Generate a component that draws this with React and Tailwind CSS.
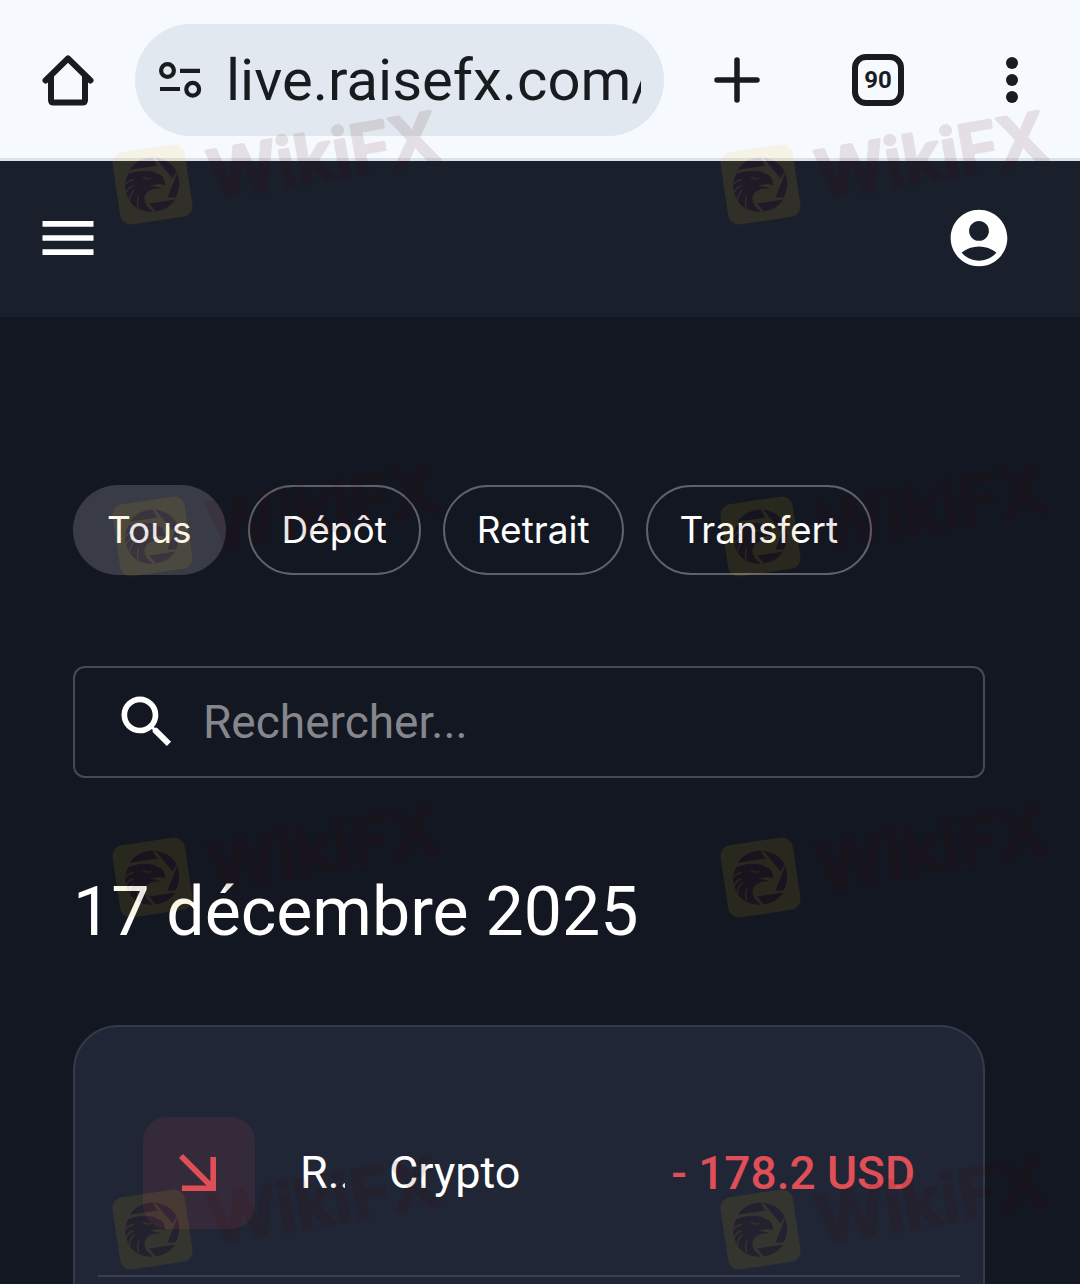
import { useState } from "react";
import { MdMenu, MdSearch } from "react-icons/md";

const FILTERS = ["Tous", "Dépôt", "Retrait", "Transfert"];

const TRANSACTIONS = [
  { id: 1, type: "R...", method: "Crypto", amount: "- 178.2 USD" },
];

// Each stamp is repeated on the left and on the right of the page
const STAMP_ROWS = ["top-[109px]", "top-[461px]", "top-[802px]", "top-[1154px]"];

function HomeIcon() {
  return (
    <svg viewBox="0 0 52 52" className="size-[52px]" fill="none" stroke="currentColor" strokeWidth="6" strokeLinecap="round" strokeLinejoin="round">
      <path d="M3.5 26.5 26 4.5l22.5 22" />
      <path d="M9 23v23q0 2.5 2.5 2.5h29q2.5 0 2.5-2.5V23" />
    </svg>
  );
}

function SiteSettingsIcon() {
  return (
    <svg viewBox="0 0 44 36" className="h-9 w-11 shrink-0" fill="none" stroke="currentColor" strokeWidth="4.2">
      <circle cx="9.5" cy="8.5" r="6.4" />
      <path d="M22 8.8h20M2 27h20" />
      <circle cx="34.7" cy="27.2" r="6.4" />
    </svg>
  );
}

function PlusIcon() {
  return (
    <svg viewBox="0 0 46 46" className="size-[46px]" fill="none" stroke="currentColor" strokeWidth="5.5" strokeLinecap="round">
      <path d="M23 3v40M3 23h40" />
    </svg>
  );
}

function MoreIcon() {
  return (
    <svg viewBox="0 0 12 46" className="h-[46px] w-3" fill="currentColor">
      <circle cx="6" cy="6" r="6" />
      <circle cx="6" cy="23" r="6" />
      <circle cx="6" cy="40" r="6" />
    </svg>
  );
}

function AccountIcon() {
  return (
    <svg viewBox="0 0 24 24" className="size-[68px]" fill="currentColor">
      <path d="M12 2C6.48 2 2 6.48 2 12s4.48 10 10 10 10-4.48 10-10S17.52 2 12 2zm0 4c1.93 0 3.5 1.57 3.5 3.5S13.93 13 12 13s-3.5-1.57-3.5-3.5S10.07 6 12 6zm0 14c-2.03 0-4.43-.82-6.14-2.88a9.947 9.947 0 0 1 12.28 0C16.43 19.18 14.03 20 12 20z" />
    </svg>
  );
}

function ArrowDownRight() {
  return (
    <svg viewBox="0 0 37 37" className="size-[37px]" fill="none" stroke="currentColor" strokeWidth="5.6">
      <path d="M2 2l30 30" />
      <path d="M34.2 3v31.2H3" />
    </svg>
  );
}

function Stamp() {
  return (
    <svg viewBox="0 0 330 120" className="h-[120px] w-[330px] overflow-visible opacity-10">
      <g transform="translate(42.5 75.5)">
        <rect x="-36.5" y="-36.5" width="73" height="73" rx="11" fill="#ebb90a" transform="rotate(-8.5)" />
        <g transform="scale(.3333) translate(-480 -658)">
          <g fill="#460000">
            <path d="M411 614Q436 578 480 576L495 602Z" />
            <path d="M487 576Q531 582 553 618L540 640Z" />
            <path d="M554 623Q569 661 550 696L525 698Z" />
            <path d="M549 703Q526 735 490 739L470 715Z" />
            <path d="M408 626Q450 610 488 621Q492 628 503 629Q518 638 517 662Q509 655 496 657L474 660Q486 665 509 668Q495 672 484 670Q454 681 456 703Q458 722 482 740Q408 741 398 668Q397 645 408 626Z" />
          </g>
          <g fill="none" stroke="#ebb90a" strokeWidth="4" strokeLinecap="round">
            <path d="M453 637Q463 645 475 640" />
            <path d="M399 657Q408 646 422 643" />
            <path d="M400 682Q407 668 421 662" />
            <path d="M411 706Q410 690 424 675" />
            <path d="M437 727Q433 709 438 694" />
          </g>
        </g>
      </g>
      <text x="103" y="91" transform="rotate(-10 103 91)" fontSize="68" fill="#460000" stroke="#460000" strokeWidth="3" strokeLinejoin="round" className="font-['Inter',sans-serif] font-semibold">
        WikiFX
      </text>
    </svg>
  );
}

function BrowserBar() {
  return (
    <div className="flex h-[161px] items-center border-b-[3px] border-[#dbe3ea] bg-[#f6faff] pt-0.5 pr-[62px] pl-[42px] text-[#191c1f]">
      <button type="button" aria-label="Accueil">
        <HomeIcon />
      </button>
      <div className="ml-[41px] flex h-28 min-w-0 flex-1 items-center gap-6 rounded-full bg-[#e2e8f0] px-[23px]">
        <SiteSettingsIcon />
        <input
          type="text"
          aria-label="Adresse"
          readOnly
          value="live.raisefx.com/"
          className="h-20 w-full min-w-0 bg-transparent text-[58px] outline-none"
        />
      </div>
      <button type="button" aria-label="Nouvel onglet" className="ml-[50px]">
        <PlusIcon />
      </button>
      <button
        type="button"
        aria-label="Onglets"
        className="ml-[92px] flex size-[52px] items-center justify-center rounded-[14px] border-[6px] border-current text-2xl font-bold"
      >
        90
      </button>
      <button type="button" aria-label="Plus" className="ml-[102px]">
        <MoreIcon />
      </button>
    </div>
  );
}

function AppHeader() {
  return (
    <header className="flex h-[156px] items-center justify-between bg-[#1a1f2c] pr-[67px] pb-0.5 pl-[34px] text-white">
      <button type="button" aria-label="Menu">
        <MdMenu className="size-[68px]" />
      </button>
      <button type="button" aria-label="Compte">
        <AccountIcon />
      </button>
    </header>
  );
}

function TransactionRow({ item }) {
  return (
    <li className="flex items-center border-b-2 border-[#3a4050] px-[45px] pt-[90px] pb-[46px] text-[45px]">
      <span className="flex size-28 shrink-0 items-center justify-center rounded-3xl bg-[#352a3a] pr-1 pb-0.5 text-[#e04f57]">
        <ArrowDownRight />
      </span>
      <span className="ml-[45px] w-[45px] shrink-0 overflow-hidden whitespace-nowrap">{item.type}</span>
      <span className="ml-11">{item.method}</span>
      <span className="ml-auto text-[46px] font-medium text-[#e04f57]">{item.amount}</span>
    </li>
  );
}

export default function App() {
  const [filter, setFilter] = useState("Tous");

  return (
    <div className="relative flex min-h-screen flex-col overflow-hidden bg-[#131721] font-['Roboto',sans-serif]">
      <BrowserBar />
      <AppHeader />

      <main className="flex flex-1 flex-col pt-[168px] pr-[95px] pl-[73px] text-white">
        <div className="flex gap-[22px] font-['Inter',sans-serif] text-[37px]">
          {FILTERS.map((name) => (
            <button
              key={name}
              type="button"
              onClick={() => setFilter(name)}
              className={
                name === filter
                  ? "h-[90px] rounded-full border-2 border-transparent bg-[#393b46] px-8"
                  : "h-[90px] rounded-full border-2 border-[#626266] px-8"
              }
            >
              {name}
            </button>
          ))}
        </div>

        <label className="mt-[91px] flex h-28 items-center gap-[22px] rounded-xl border-2 border-[#474a53] pl-[38px]">
          <MdSearch className="size-[68px] shrink-0" />
          <input
            type="text"
            aria-label="Rechercher"
            placeholder="Rechercher..."
            className="h-16 w-full min-w-0 bg-transparent text-[46px] outline-none placeholder:text-[#85878d]"
          />
        </label>

        <h1 className="mt-[94px] text-[68px] leading-[80px]">17 décembre 2025</h1>

        <section className="mt-[73px] flex-1 rounded-t-[45px] border-2 border-b-0 border-[#343a49] bg-[#202635] px-[23px]">
          <ul>
            {TRANSACTIONS.map((item) => (
              <TransactionRow key={item.id} item={item} />
            ))}
          </ul>
        </section>
      </main>

      <div className="pointer-events-none absolute inset-0" aria-hidden="true">
        {STAMP_ROWS.map((top) => (
          <div key={top} className={`absolute left-[110px] flex gap-[278px] ${top}`}>
            <Stamp />
            <Stamp />
          </div>
        ))}
      </div>
    </div>
  );
}
